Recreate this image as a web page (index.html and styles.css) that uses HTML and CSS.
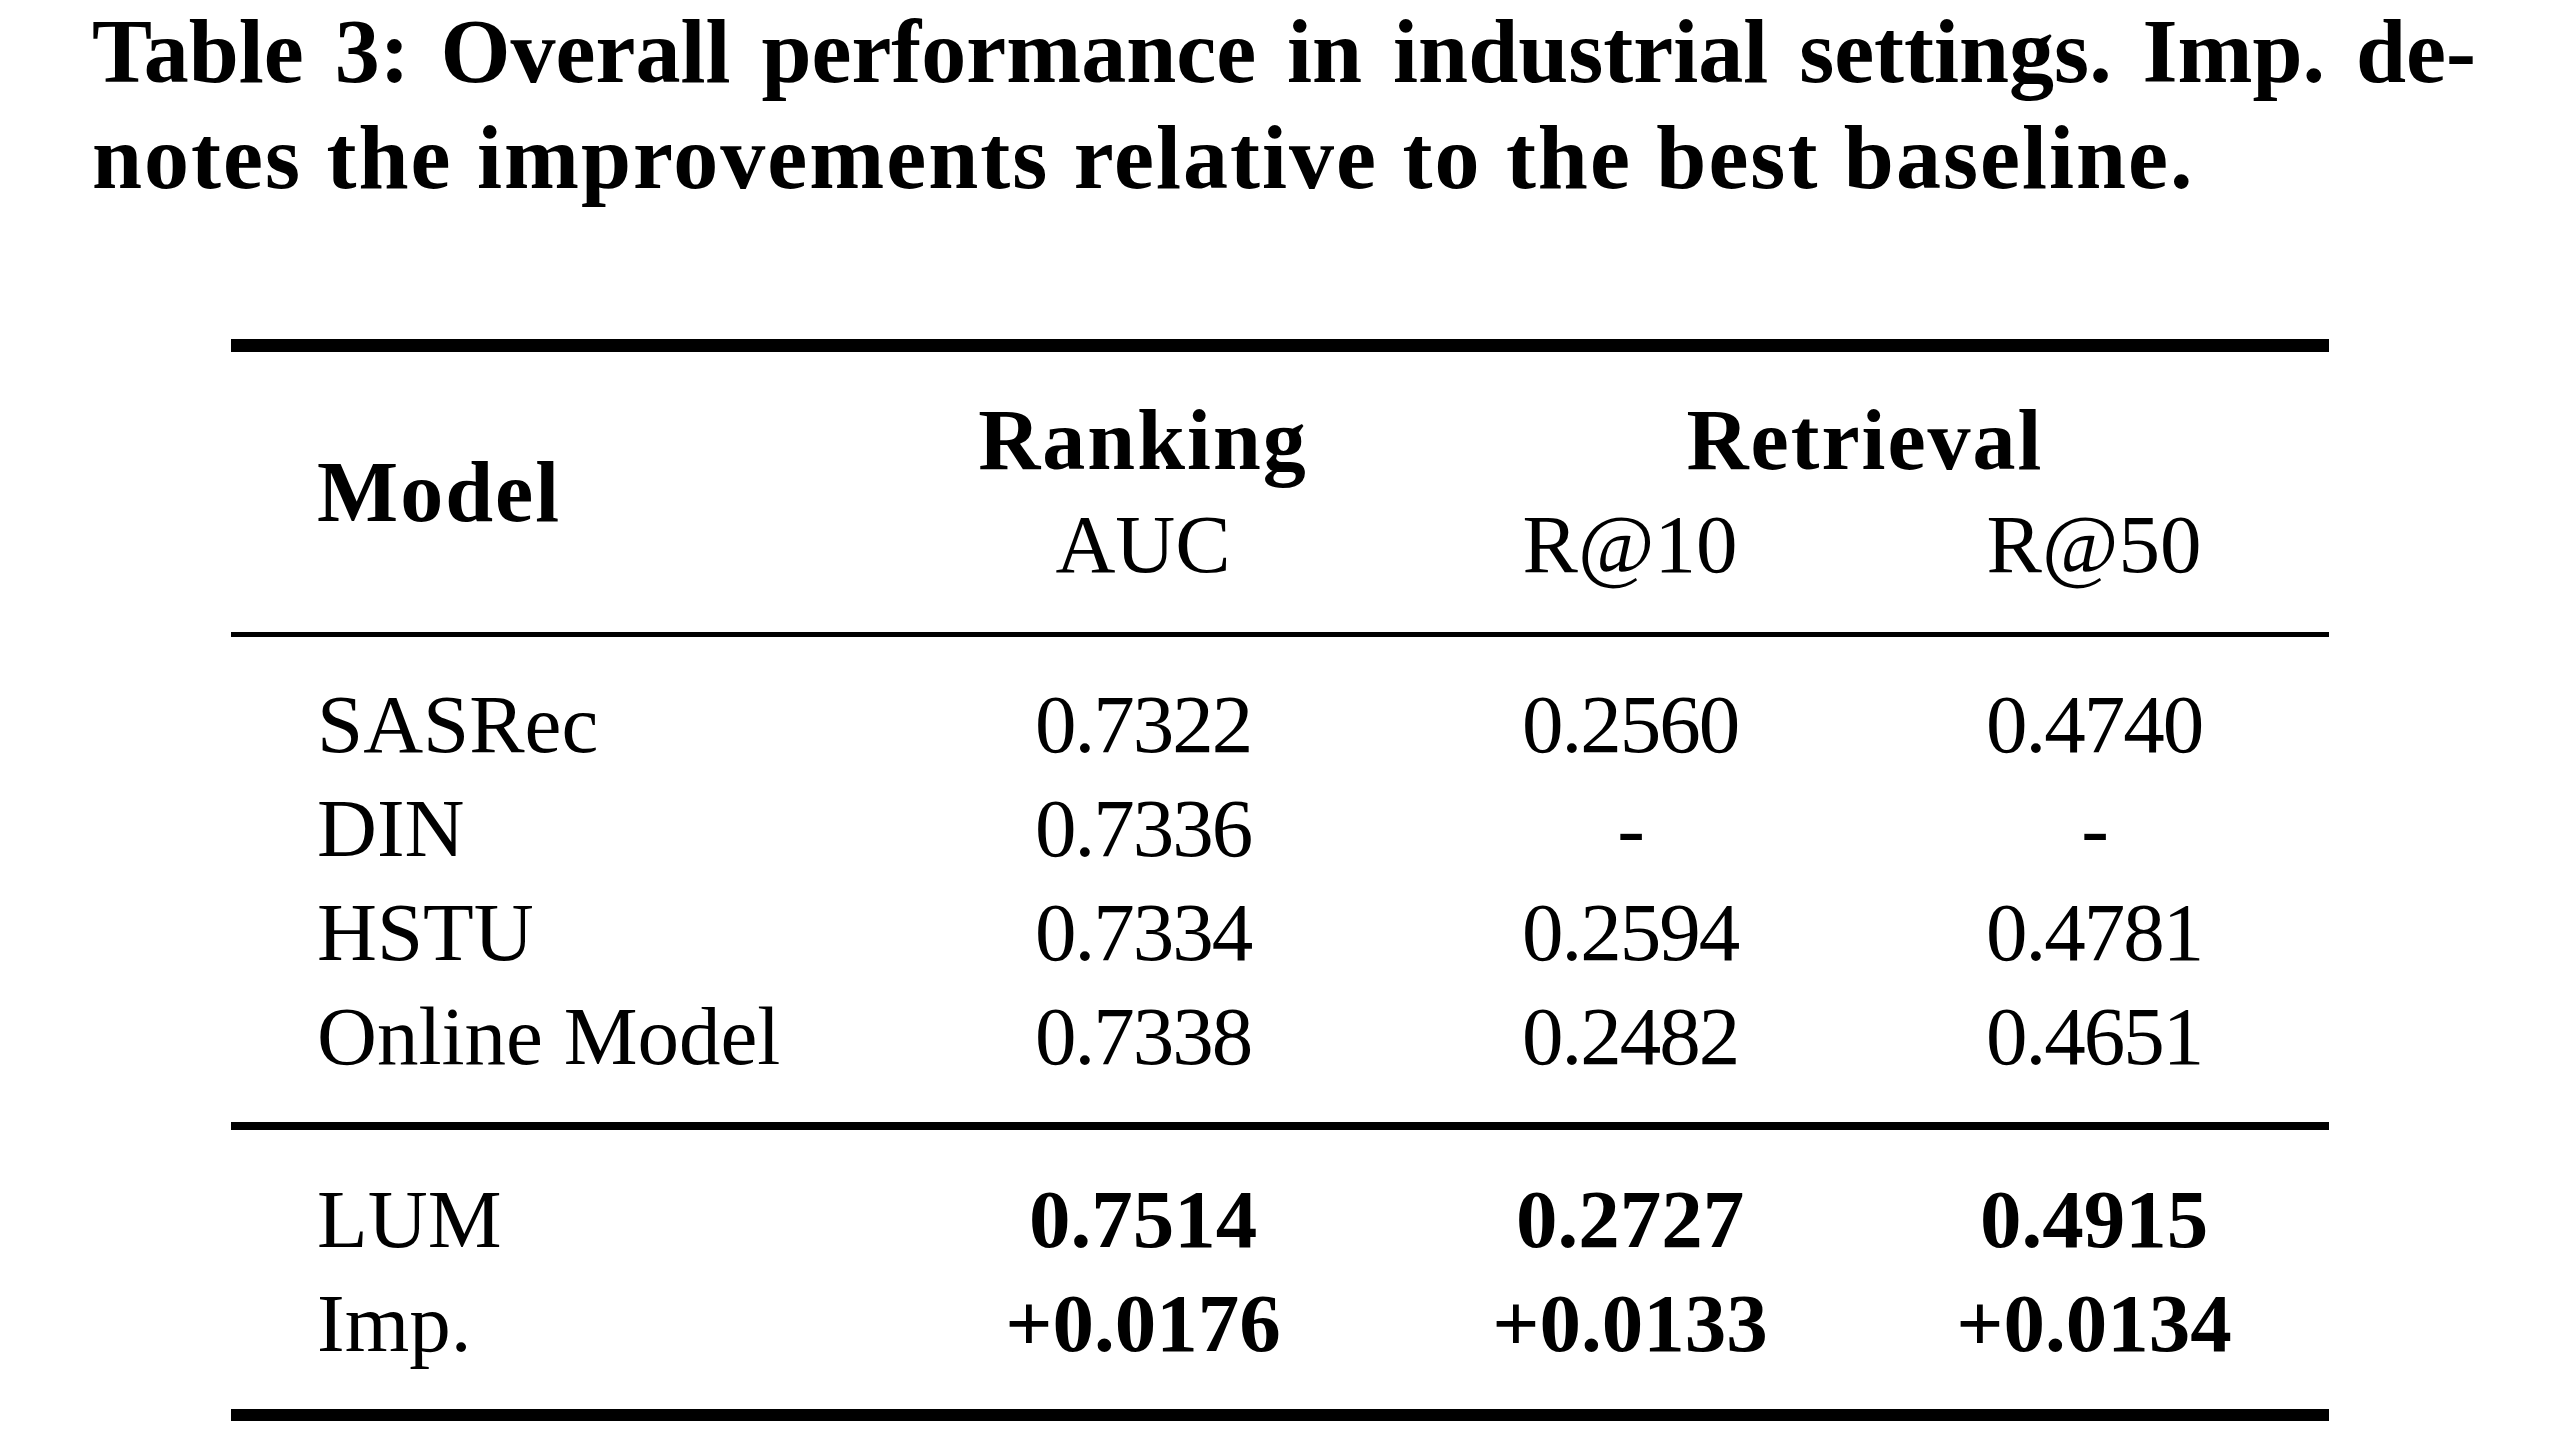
FILE: index.html
```html
<!DOCTYPE html>
<html lang="en">
<head>
<meta charset="utf-8">
<title>Table 3</title>
<link rel="stylesheet" href="styles.css">
</head>
<body>
<div class="page">
  <div class="caption">
    <span class="cap-line cap-justify">Table 3: Overall performance in industrial settings. Imp. de-</span>
    <span class="cap-line">notes the improvements relative to the best baseline.</span>
  </div>

  <div class="tbl">
    <div class="rule rule-heavy"></div>

    <div class="sec sec-head">
      <div class="cell name head model-h">Model</div>
      <div class="cell head group g-rank">Ranking</div>
      <div class="cell head group g-ret">Retrieval</div>
      <div class="cell sub">AUC</div>
      <div class="cell sub">R@10</div>
      <div class="cell sub">R@50</div>
    </div>

    <div class="rule rule-mid"></div>

    <div class="sec sec-base">
      <div class="cell name">SASRec</div>
      <div class="cell num">0.7322</div>
      <div class="cell num">0.2560</div>
      <div class="cell num">0.4740</div>

      <div class="cell name">DIN</div>
      <div class="cell num">0.7336</div>
      <div class="cell num">-</div>
      <div class="cell num">-</div>

      <div class="cell name">HSTU</div>
      <div class="cell num">0.7334</div>
      <div class="cell num">0.2594</div>
      <div class="cell num">0.4781</div>

      <div class="cell name">Online Model</div>
      <div class="cell num">0.7338</div>
      <div class="cell num">0.2482</div>
      <div class="cell num">0.4651</div>
    </div>

    <div class="rule rule-sep"></div>

    <div class="sec sec-ours">
      <div class="cell name">LUM</div>
      <div class="cell num best">0.7514</div>
      <div class="cell num best">0.2727</div>
      <div class="cell num best">0.4915</div>

      <div class="cell name">Imp.</div>
      <div class="cell num best">+0.0176</div>
      <div class="cell num best">+0.0133</div>
      <div class="cell num best">+0.0134</div>
    </div>

    <div class="rule rule-bottom"></div>
  </div>
</div>
</body>
</html>
```

FILE: styles.css
```css
html, body {
  margin: 0;
  padding: 0;
  background: #ffffff;
}

body {
  font-family: "Liberation Serif", "Times New Roman", serif;
  color: #000000;
  width: 2560px;
  height: 1440px;
  overflow: hidden;
}

.page {
  padding-top: 0;
}

/* ---------- caption ---------- */
.caption {
  margin-left: 92px;
  width: 2384px;
  margin-top: -1px;
  font-weight: bold;
  font-size: 90px;
  line-height: 106px;
  letter-spacing: 2px;
}

.cap-line {
  display: block;
  white-space: nowrap;
}

.cap-justify {
  letter-spacing: 0;
  text-align: justify;
  text-align-last: justify;
}

/* ---------- table ---------- */
.tbl {
  margin-top: 128px;
  margin-left: 231px;
  width: 2098px;
}

.rule {
  background: #000000;
  width: 100%;
}

.rule-heavy { height: 13px; }
.rule-mid { height: 5px; }
.rule-sep { height: 8px; }
.rule-bottom { height: 12px; }

.sec {
  display: grid;
  grid-template-columns: 654px 516px 458px 470px;
  grid-auto-rows: 104px;
}

.sec-head {
  padding: 36px 0;
}

.sec-base {
  padding: 35px 0 34px;
}

.sec-ours {
  padding: 37px 0 34px;
}

.cell {
  font-size: 83px;
  line-height: 104px;
  white-space: nowrap;
  text-align: center;
}

.cell.name {
  text-align: left;
  padding-left: 86px;
}

.cell.head {
  font-weight: bold;
  font-size: 86px;
  letter-spacing: 2px;
}

.model-h {
  grid-column: 1;
  grid-row: 1 / span 2;
  align-self: center;
}

.g-rank {
  grid-column: 2;
  grid-row: 1;
}

.g-ret {
  grid-column: 3 / span 2;
  grid-row: 1;
}

.sub {
  grid-row: 2;
}

.num {
  letter-spacing: -2px;
}

.num.best {
  font-weight: bold;
  letter-spacing: 0;
}
```
